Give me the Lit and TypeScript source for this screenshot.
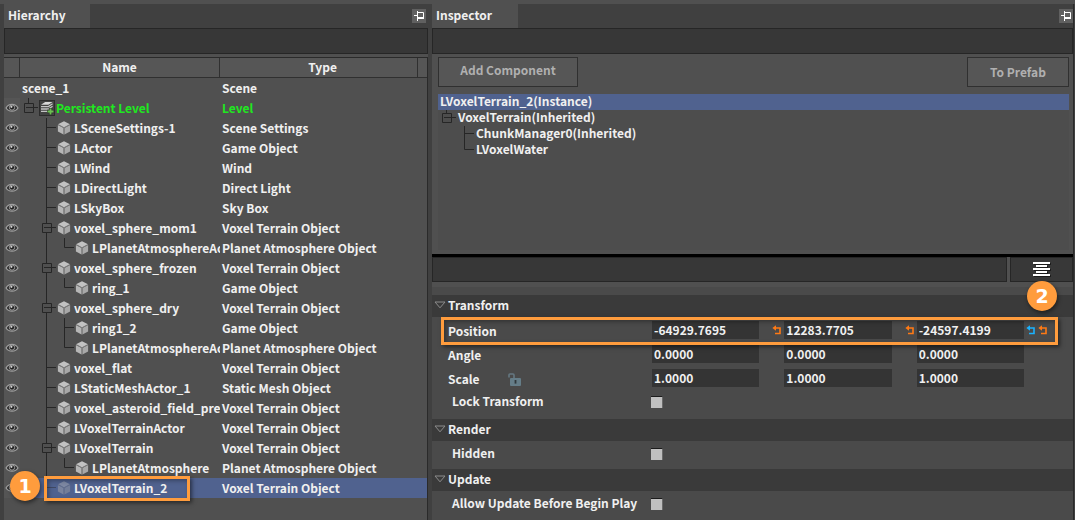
import { LitElement, html, svg, css, nothing } from "lit";
import { customElement } from "lit/decorators.js";
import { classMap } from "lit/directives/class-map.js";

type Guide = "none" | "line" | "tee" | "end" | "box" | "root";

interface TreeRow {
  name: string;
  type: string;
  guides: Guide[];
  icon?: "cube" | "level";
  eye?: boolean;
  selected?: boolean;
  level?: boolean;
}

const cube = (name: string, type: string, ...guides: Guide[]): TreeRow => ({
  name,
  type,
  guides: ["none", ...guides],
  icon: "cube",
  eye: true,
});

const ROWS: TreeRow[] = [
  { name: "scene_1", type: "Scene", guides: [] },
  { name: "Persistent Level", type: "Level", guides: ["root"], icon: "level", eye: true, level: true },
  cube("LSceneSettings-1", "Scene Settings", "tee"),
  cube("LActor", "Game Object", "tee"),
  cube("LWind", "Wind", "tee"),
  cube("LDirectLight", "Direct Light", "tee"),
  cube("LSkyBox", "Sky Box", "tee"),
  cube("voxel_sphere_mom1", "Voxel Terrain Object", "box"),
  cube("LPlanetAtmosphereAc", "Planet Atmosphere Object", "line", "end"),
  cube("voxel_sphere_frozen", "Voxel Terrain Object", "box"),
  cube("ring_1", "Game Object", "line", "end"),
  cube("voxel_sphere_dry", "Voxel Terrain Object", "box"),
  cube("ring1_2", "Game Object", "line", "tee"),
  cube("LPlanetAtmosphereAc", "Planet Atmosphere Object", "line", "end"),
  cube("voxel_flat", "Voxel Terrain Object", "tee"),
  cube("LStaticMeshActor_1", "Static Mesh Object", "tee"),
  cube("voxel_asteroid_field_pre", "Voxel Terrain Object", "tee"),
  cube("LVoxelTerrainActor", "Voxel Terrain Object", "tee"),
  cube("LVoxelTerrain", "Voxel Terrain Object", "box"),
  cube("LPlanetAtmosphere", "Planet Atmosphere Object", "line", "end"),
  { ...cube("LVoxelTerrain_2", "Voxel Terrain Object", "end"), selected: true },
];

/** Branch lines of one indent step, drawn for a row of height h. */
function guide(kind: Guide, h: number) {
  const m = h / 2;
  const paths: Record<Guide, string> = {
    none: "",
    line: `M8.5 0V${h}`,
    tee: `M8.5 0V${h}M8.5 ${m - 0.5}H18`,
    end: `M8.5 0V${m - 0.5}H18`,
    box: `M8.5 0V${m - 5}M8.5 ${m + 5}V${h}M4.5 ${m - 4.5}h9v9h-9zM6 ${m - 0.5}H18`,
    root: `M8.5 0V${m - 5}M4.5 ${m - 4.5}h9v9h-9zM6 ${m - 0.5}H18`,
  };
  return html`<svg class="guide" width="18" height=${h} aria-hidden="true">
    ${svg`<path d=${paths[kind]} fill="none" stroke="#262626"/>`}
  </svg>`;
}

const cubeIcon = html`<svg width="14" height="14" viewBox="0 0 14 14" aria-hidden="true">
  <path d="M7 .2 13 3.2 7 6.4 1 3.2z" fill="#c2c2c2" />
  <path d="M.9 4 6.6 7V13.6L.9 10.6z" fill="#b6b6b6" />
  <path d="M13.1 4 7.4 7V13.6L13.1 10.6z" fill="#a8a8a8" />
  <path d="M1 3.5 7 6.7 13 3.5M7 6.7V13.6" fill="none" stroke="#808080" stroke-width=".8" />
</svg>`;

const levelIcon = html`<svg width="16" height="16" viewBox="0 0 16 16" aria-hidden="true">
  <rect x=".5" y=".5" width="15" height="15" fill="#424242" stroke="#2c2c2c" />
  <path d="M6.2 2H13.6L9.4 4.8H2z" fill="#d8d8d8" />
  <path d="M2 6.6H9.4L13.6 3.8M2 9H9.4L13.6 6.2M2 11.4H8L9 10.8" fill="none" stroke="#c4c4c4" stroke-width="1.3" />
  <path d="M11.5 8v7M8 11.5h7" stroke="#333" stroke-width="3.4" />
  <path d="M11.5 8.5v6M8.5 11.5h6" stroke="#6cbf52" stroke-width="1.8" />
</svg>`;

const eyeIcon = html`<svg width="14" height="10" viewBox="0 0 14 10" aria-hidden="true">
  <path d="M1 5C3.6 .2 10.4 .2 13 5 10.4 9.2 3.6 9.2 1 5z" fill="#333" stroke="#a0a0a0" stroke-width="1.2" />
  <circle cx="7" cy="4.6" r="2.6" fill="#222" stroke="#a0a0a0" />
  <circle cx="6.4" cy="3.8" r="1.1" fill="#d0d0d0" />
</svg>`;

const pinIcon = html`<svg width="14" height="14" viewBox="0 0 14 14" aria-hidden="true">
  <path d="M2 6.5H5M5.5 2V12M5.5 3.5H11.5V9.5" fill="none" stroke="#fff" />
  <path d="M5.5 9H12" stroke="#fff" stroke-width="2" />
</svg>`;

const undoIcon = html`<svg width="10" height="10" viewBox="0 0 10 10" aria-hidden="true">
  <path d="M3 3H8V8.5H3" fill="none" stroke="currentColor" stroke-width="1.6" />
  <path d="M.4 3 4 .2V5.8z" fill="currentColor" />
</svg>`;

const lockIcon = html`<svg width="13" height="13" viewBox="0 0 13 13" aria-hidden="true">
  <path d="M1 4.4V1.8Q1 1 2 1H5Q6 1 6 2V5" fill="none" stroke="#657882" stroke-width="1.6" />
  <rect x="2" y="5" width="11" height="8" rx="1" fill="#657d88" />
  <rect x="6.6" y="7" width="1.8" height="3.6" fill="#30383c" />
</svg>`;

const triangle = html`<svg width="12" height="8" viewBox="0 0 12 8" aria-hidden="true">
  <path d="M1 1H11L6 6.8z" fill="none" stroke="#8c8c8c" />
</svg>`;

const menuIcon = html`<svg width="18" height="15" viewBox="0 0 18 15" aria-hidden="true">
  <path d="M0 1H17M3 4H14M0 7H17M3 10H14M0 13H17" transform="translate(1 1)" stroke="#1c1c1c" stroke-width="2" />
  <path d="M0 1H17M3 4H14M0 7H17M3 10H14M0 13H17" stroke="#fff" stroke-width="2" />
</svg>`;

const shared = css`
  * {
    box-sizing: border-box;
  }
  :host {
    display: flex;
    flex-direction: column;
    min-width: 0;
    min-height: 0;
    background: #505050;
  }
  svg {
    display: block;
    flex: none;
  }
  button,
  input {
    font: inherit;
    color: inherit;
    margin: 0;
    padding: 0;
    border: 0;
    border-radius: 0;
    background: none;
    appearance: none;
    outline: none;
  }
  .tabs {
    display: flex;
    flex: none;
    height: 24px;
    align-items: center;
    justify-content: space-between;
    background: #404040;
  }
  .tab {
    width: 86px;
    height: 24px;
    padding: 0 0 2px 4px;
    text-align: left;
    background: #505050;
  }
  .pin {
    background: #606060;
  }
  .search {
    display: block;
    flex: none;
    width: 100%;
    height: 26px;
    padding: 0 6px;
    background: #373737;
    border: 1px solid #262626;
  }
  .guide {
    align-self: stretch;
  }
  .mark {
    position: absolute;
    border: 3px solid #ff9c3d;
    box-shadow: 2px 2px 4px rgba(0, 0, 0, 0.5), inset 2px 2px 4px rgba(0, 0, 0, 0.3);
    pointer-events: none;
    z-index: 1;
  }
  .badge {
    position: absolute;
    width: 30px;
    height: 30px;
    border-radius: 50%;
    background: #ff9c3d;
    color: #fff;
    font: bold 19px/30px "DejaVu Sans", sans-serif;
    text-align: center;
    box-shadow: 1px 2px 4px rgba(0, 0, 0, 0.5);
    z-index: 2;
  }
`;

@customElement("hierarchy-panel")
export class HierarchyPanel extends LitElement {
  static styles = [
    shared,
    css`
      .pin {
        margin-right: 2px;
      }
      .body {
        flex: 1;
        min-height: 0;
        margin-top: 3px;
        border-top: 1px solid #2a2a2a;
        border-right: 1px solid #2a2a2a;
      }
      table {
        width: 100%;
        table-layout: fixed;
        border-collapse: separate;
        border-spacing: 0;
      }
      th,
      td {
        padding: 0;
        height: 20px;
        font-weight: inherit;
        text-align: left;
      }
      th {
        padding: 0 0 2px;
        text-align: center;
        background: #565656;
        border-right: 1px solid #303030;
        border-bottom: 1px solid #303030;
      }
      th:last-child {
        border-right: 0;
      }
      .type-head {
        padding-left: 8px;
      }
      .c-eye {
        width: 16px;
      }
      .c-name {
        width: 200px;
      }
      .c-tail {
        width: 9px;
      }
      .eye {
        background: #555;
      }
      .eye svg {
        margin: 0 auto;
      }
      .blank {
        background: none;
      }
      .name {
        position: relative;
      }
      .clip {
        display: flex;
        align-items: center;
        height: 20px;
        line-height: 20px;
        overflow: hidden;
        white-space: nowrap;
      }
      .icon {
        flex: none;
        width: 18px;
        padding-left: 1px;
      }
      .scene {
        padding-left: 2px;
      }
      .type {
        padding-left: 2px;
        white-space: nowrap;
        overflow: hidden;
      }
      .level {
        color: #20e820;
      }
      .selected .name,
      .selected .type {
        background: #50628f;
      }
      .selected .icon,
      .selected .guide {
        opacity: 0.4;
      }
      .mark {
        left: 24px;
        top: -2px;
        width: 146px;
        height: 25px;
      }
      .badge {
        left: -10px;
        top: -7px;
      }
    `,
  ];

  render() {
    return html`
      <div class="tabs">
        <button class="tab">Hierarchy</button>
        <button class="pin" aria-label="Pin Hierarchy">${pinIcon}</button>
      </div>
      <input class="search" type="text" aria-label="Search hierarchy" />
      <div class="body">
        <table>
          <colgroup>
            <col class="c-eye" />
            <col class="c-name" />
            <col />
            <col class="c-tail" />
          </colgroup>
          <thead>
            <tr>
              <th></th>
              <th>Name</th>
              <th class="type-head">Type</th>
              <th></th>
            </tr>
          </thead>
          <tbody>
            ${ROWS.map((r) => this.row(r))}
          </tbody>
        </table>
      </div>
    `;
  }

  private row(r: TreeRow) {
    return html`<tr class=${classMap({ selected: !!r.selected, level: !!r.level })}>
      <td class=${classMap({ eye: true, blank: !r.eye })}>${r.eye ? eyeIcon : nothing}</td>
      <td class="name">
        <div class="clip">
          ${r.guides.map((g) => guide(g, 20))}
          ${r.icon ? html`<span class="icon">${r.icon === "cube" ? cubeIcon : levelIcon}</span>` : nothing}
          <span class=${classMap({ scene: !r.icon })}>${r.name}</span>
        </div>
        ${r.selected ? html`<div class="mark"></div><div class="badge">1</div>` : nothing}
      </td>
      <td class="type" colspan="2">${r.type}</td>
    </tr>`;
  }
}

interface Vector {
  label: string;
  values: string[];
  lock?: boolean;
  changed?: boolean;
}

const VECTORS: Vector[] = [
  { label: "Position", values: ["-64929.7695", "12283.7705", "-24597.4199"], changed: true },
  { label: "Angle", values: ["0.0000", "0.0000", "0.0000"] },
  { label: "Scale", values: ["1.0000", "1.0000", "1.0000"], lock: true },
];

const COMPONENTS: { name: string; guides: Guide[]; selected?: boolean }[] = [
  { name: "LVoxelTerrain_2(Instance)", guides: [], selected: true },
  { name: "VoxelTerrain(Inherited)", guides: ["root"] },
  { name: "ChunkManager0(Inherited)", guides: ["none", "tee"] },
  { name: "LVoxelWater", guides: ["none", "end"] },
];

@customElement("inspector-panel")
export class InspectorPanel extends LitElement {
  static styles = [
    shared,
    css`
      :host {
        border-right: 1px solid #2a2a2a;
      }
      .tools {
        display: flex;
        flex: none;
        justify-content: space-between;
        padding: 3px 4px 7px 6px;
      }
      .tools button {
        height: 30px;
        border: 1px solid #303030;
        background: #565656;
        color: #b0b0b0;
      }
      .add {
        width: 140px;
        padding-bottom: 4px;
      }
      .prefab {
        width: 102px;
      }
      .components {
        flex: none;
        height: 156px;
        margin: 0 4px 4px 6px;
        padding: 0;
        list-style: none;
        background: #4d4d4d;
      }
      .component {
        display: flex;
        height: 16px;
        line-height: 14px;
      }
      .component span {
        padding-left: 2px;
      }
      .component.selected {
        background: #50628f;
      }
      .filter {
        display: flex;
        flex: none;
        gap: 3px;
        height: 28px;
        border-top: 3px solid #000;
      }
      .filter .search {
        flex: 1;
        width: auto;
        min-width: 0;
        height: 25px;
      }
      .menu {
        display: flex;
        align-items: center;
        justify-content: center;
        width: 63px;
        height: 25px;
        background: #383838;
        border: 1px solid #262626;
      }
      .properties {
        flex: 1;
        min-height: 0;
        margin-top: 5px;
        padding-top: 8px;
        background: #4a4a4a;
      }
      .heading {
        display: flex;
        align-items: center;
        width: 100%;
        height: 22px;
        padding: 0 0 2px 2px;
        gap: 2px;
        background: #3a3a3a;
      }
      .group {
        padding: 1px 0 3px;
      }
      .group.vectors {
        padding-bottom: 5px;
      }
      .row {
        position: relative;
        display: grid;
        grid-template-columns: 195px repeat(3, minmax(0, 1fr)) 24px;
        column-gap: 25px;
        align-items: center;
        height: 24px;
      }
      .caption {
        display: flex;
        align-items: center;
        padding: 2px 0 0 16px;
        white-space: nowrap;
      }
      .caption.inset {
        padding: 0 0 2px 20px;
      }
      .lock {
        margin-left: 28px;
      }
      .cell {
        position: relative;
      }
      .value {
        display: block;
        width: 100%;
        height: 18px;
        padding: 0 2px 2px;
        background: #343434;
      }
      .undo {
        position: absolute;
        top: 4px;
        left: -12px;
        color: #ff7a14;
      }
      .undo.after {
        left: auto;
        right: -24px;
      }
      .undo.default {
        left: auto;
        right: -12px;
        color: #1ab2ff;
      }
      .check {
        width: 12px;
        height: 12px;
        margin-left: -1px;
        background: #c0c0c0;
        border-top: 1px solid #1c1c1c;
        border-right: 1px solid #6a6a6a;
      }
      .mark {
        left: 9px;
        right: 15px;
        top: -1px;
        height: 28px;
      }
      .badge {
        right: 16px;
        top: -37px;
      }
    `,
  ];

  render() {
    return html`
      <div class="tabs">
        <button class="tab">Inspector</button>
        <button class="pin" aria-label="Pin Inspector">${pinIcon}</button>
      </div>
      <input class="search" type="text" aria-label="Search components" />
      <div class="tools">
        <button class="add">Add Component</button>
        <button class="prefab">To Prefab</button>
      </div>
      <ul class="components">
        ${COMPONENTS.map(
          (c) => html`<li class=${classMap({ component: true, selected: !!c.selected })}>
            ${c.guides.map((g) => guide(g, 16))}<span>${c.name}</span>
          </li>`,
        )}
      </ul>
      <div class="filter">
        <input class="search" type="text" aria-label="Filter properties" />
        <button class="menu" aria-label="Property menu">${menuIcon}</button>
      </div>
      <div class="properties">
        ${this.heading("Transform")}
        <div class="group vectors">
          ${VECTORS.map((v) => this.vector(v))} ${this.check("lock-transform", "Lock Transform")}
        </div>
        ${this.heading("Render")}
        <div class="group">${this.check("hidden", "Hidden")}</div>
        ${this.heading("Update")}
        <div class="group">${this.check("allow-update", "Allow Update Before Begin Play")}</div>
      </div>
    `;
  }

  private heading(title: string) {
    return html`<button class="heading" aria-expanded="true">${triangle}<span>${title}</span></button>`;
  }

  private vector(v: Vector) {
    const id = v.label.toLowerCase();
    const last = v.values.length - 1;
    return html`<div class="row">
      <label class="caption" for=${`${id}-0`}>
        ${v.label}${v.lock ? html`<span class="lock">${lockIcon}</span>` : nothing}
      </label>
      ${v.values.map(
        (value, i) => html`<div class="cell">
          ${v.changed && i > 0
            ? html`<button class="undo" aria-label="Revert">${undoIcon}</button>`
            : nothing}
          <input class="value" type="text" id=${`${id}-${i}`} aria-label=${`${v.label} ${"XYZ"[i]}`} .value=${value} />
          ${v.changed && i === last
            ? html`<button class="undo default" aria-label="Reset to prefab">${undoIcon}</button>
                <button class="undo after" aria-label="Revert">${undoIcon}</button>`
            : nothing}
        </div>`,
      )}
      ${v.changed ? html`<div class="mark"></div><div class="badge">2</div>` : nothing}
    </div>`;
  }

  private check(id: string, label: string) {
    return html`<div class="row">
      <label class="caption inset" for=${id}>${label}</label>
      <input class="check" type="checkbox" id=${id} />
    </div>`;
  }
}

@customElement("app-root")
export class AppRoot extends LitElement {
  static styles = css`
    :host {
      display: grid;
      grid-template-columns: minmax(0, 424fr) minmax(0, 642fr);
      grid-template-rows: minmax(0, 1fr);
      gap: 4px;
      box-sizing: border-box;
      height: 100vh;
      padding: 0 1px 0 4px;
      border-top: 4px solid #505050;
      background: #404040;
      color: #f0f0f0;
      font: bold 12px/16px "Noto Sans CJK SC", "Noto Sans", sans-serif;
      overflow: hidden;
    }
  `;

  render() {
    return html`<hierarchy-panel></hierarchy-panel><inspector-panel></inspector-panel>`;
  }
}
